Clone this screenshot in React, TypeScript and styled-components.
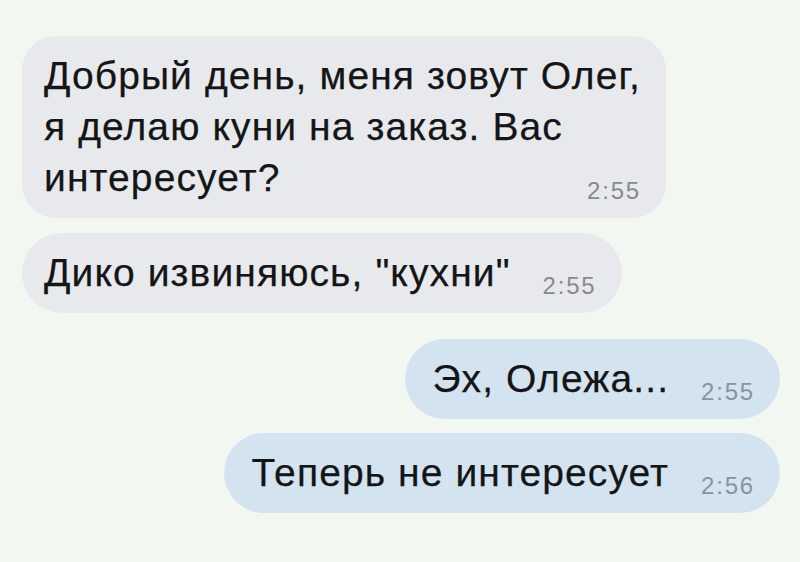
import styled, { createGlobalStyle } from 'styled-components';

interface Message {
  id: number;
  lines: string[];
  time: string;
  out?: boolean;
  gapBefore: number;
}

const messages: Message[] = [
  {
    id: 1,
    lines: ['Добрый день, меня зовут Олег,', 'я делаю куни на заказ. Вас', 'интересует?'],
    time: '2:55',
    gapBefore: 0,
  },
  { id: 2, lines: ['Дико извиняюсь, "кухни"'], time: '2:55', gapBefore: 15 },
  { id: 3, lines: ['Эх, Олежа...'], time: '2:55', out: true, gapBefore: 26 },
  { id: 4, lines: ['Теперь не интересует'], time: '2:56', out: true, gapBefore: 14 },
];

const GlobalStyle = createGlobalStyle`
  html, body {
    margin: 0;
    padding: 0;
    background: #f3f7f1;
  }
  * {
    box-sizing: border-box;
  }
`;

const Chat = styled.div`
  width: 800px;
  height: 562px;
  padding: 36px 20px 0 22px;
  display: flex;
  flex-direction: column;
  background: #f3f7f1;
  font-family: 'Liberation Sans', Arial, sans-serif;
  overflow: hidden;
`;

const Row = styled.div<{ $out?: boolean; $gap: number }>`
  display: flex;
  justify-content: ${(p) => (p.$out ? 'flex-end' : 'flex-start')};
  margin-top: ${(p) => p.$gap}px;
`;

// multi-line bubbles stack the time into the free space of the last line
const Bubble = styled.div<{ $out?: boolean; $multi?: boolean }>`
  display: ${(p) => (p.$multi ? 'grid' : 'flex')};
  align-items: flex-end;
  gap: 32px;
  padding: 14px 25px 15px ${(p) => (p.$out ? 27 : 22)}px;
  border-radius: ${(p) => (p.$multi ? 34 : 40)}px;
  background: ${(p) => (p.$out ? '#d3e3f0' : '#e8e9ed')};
`;

const Text = styled.div`
  grid-area: 1 / 1;
  font-size: 39px;
  line-height: 51px;
  letter-spacing: 1.1px;
  color: #141517;
  -webkit-text-stroke: 0.25px #141517;
  white-space: nowrap;
`;

const Time = styled.span<{ $out?: boolean }>`
  grid-area: 1 / 1;
  justify-self: end;
  font-size: 24px;
  line-height: 1;
  letter-spacing: 1.8px;
  margin-bottom: 0;
  color: ${(p) => (p.$out ? '#8693a0' : '#88898e')};
`;

export default function App() {
  return (
    <>
      <GlobalStyle />
      <Chat>
        {messages.map((m) => {
          const multi = m.lines.length > 1;
          return (
            <Row key={m.id} $out={m.out} $gap={m.gapBefore}>
              <Bubble $out={m.out} $multi={multi}>
                <Text>
                  {m.lines.map((line, i) => (
                    <div key={i}>{line}</div>
                  ))}
                </Text>
                <Time $out={m.out}>{m.time}</Time>
              </Bubble>
            </Row>
          );
        })}
      </Chat>
    </>
  );
}
